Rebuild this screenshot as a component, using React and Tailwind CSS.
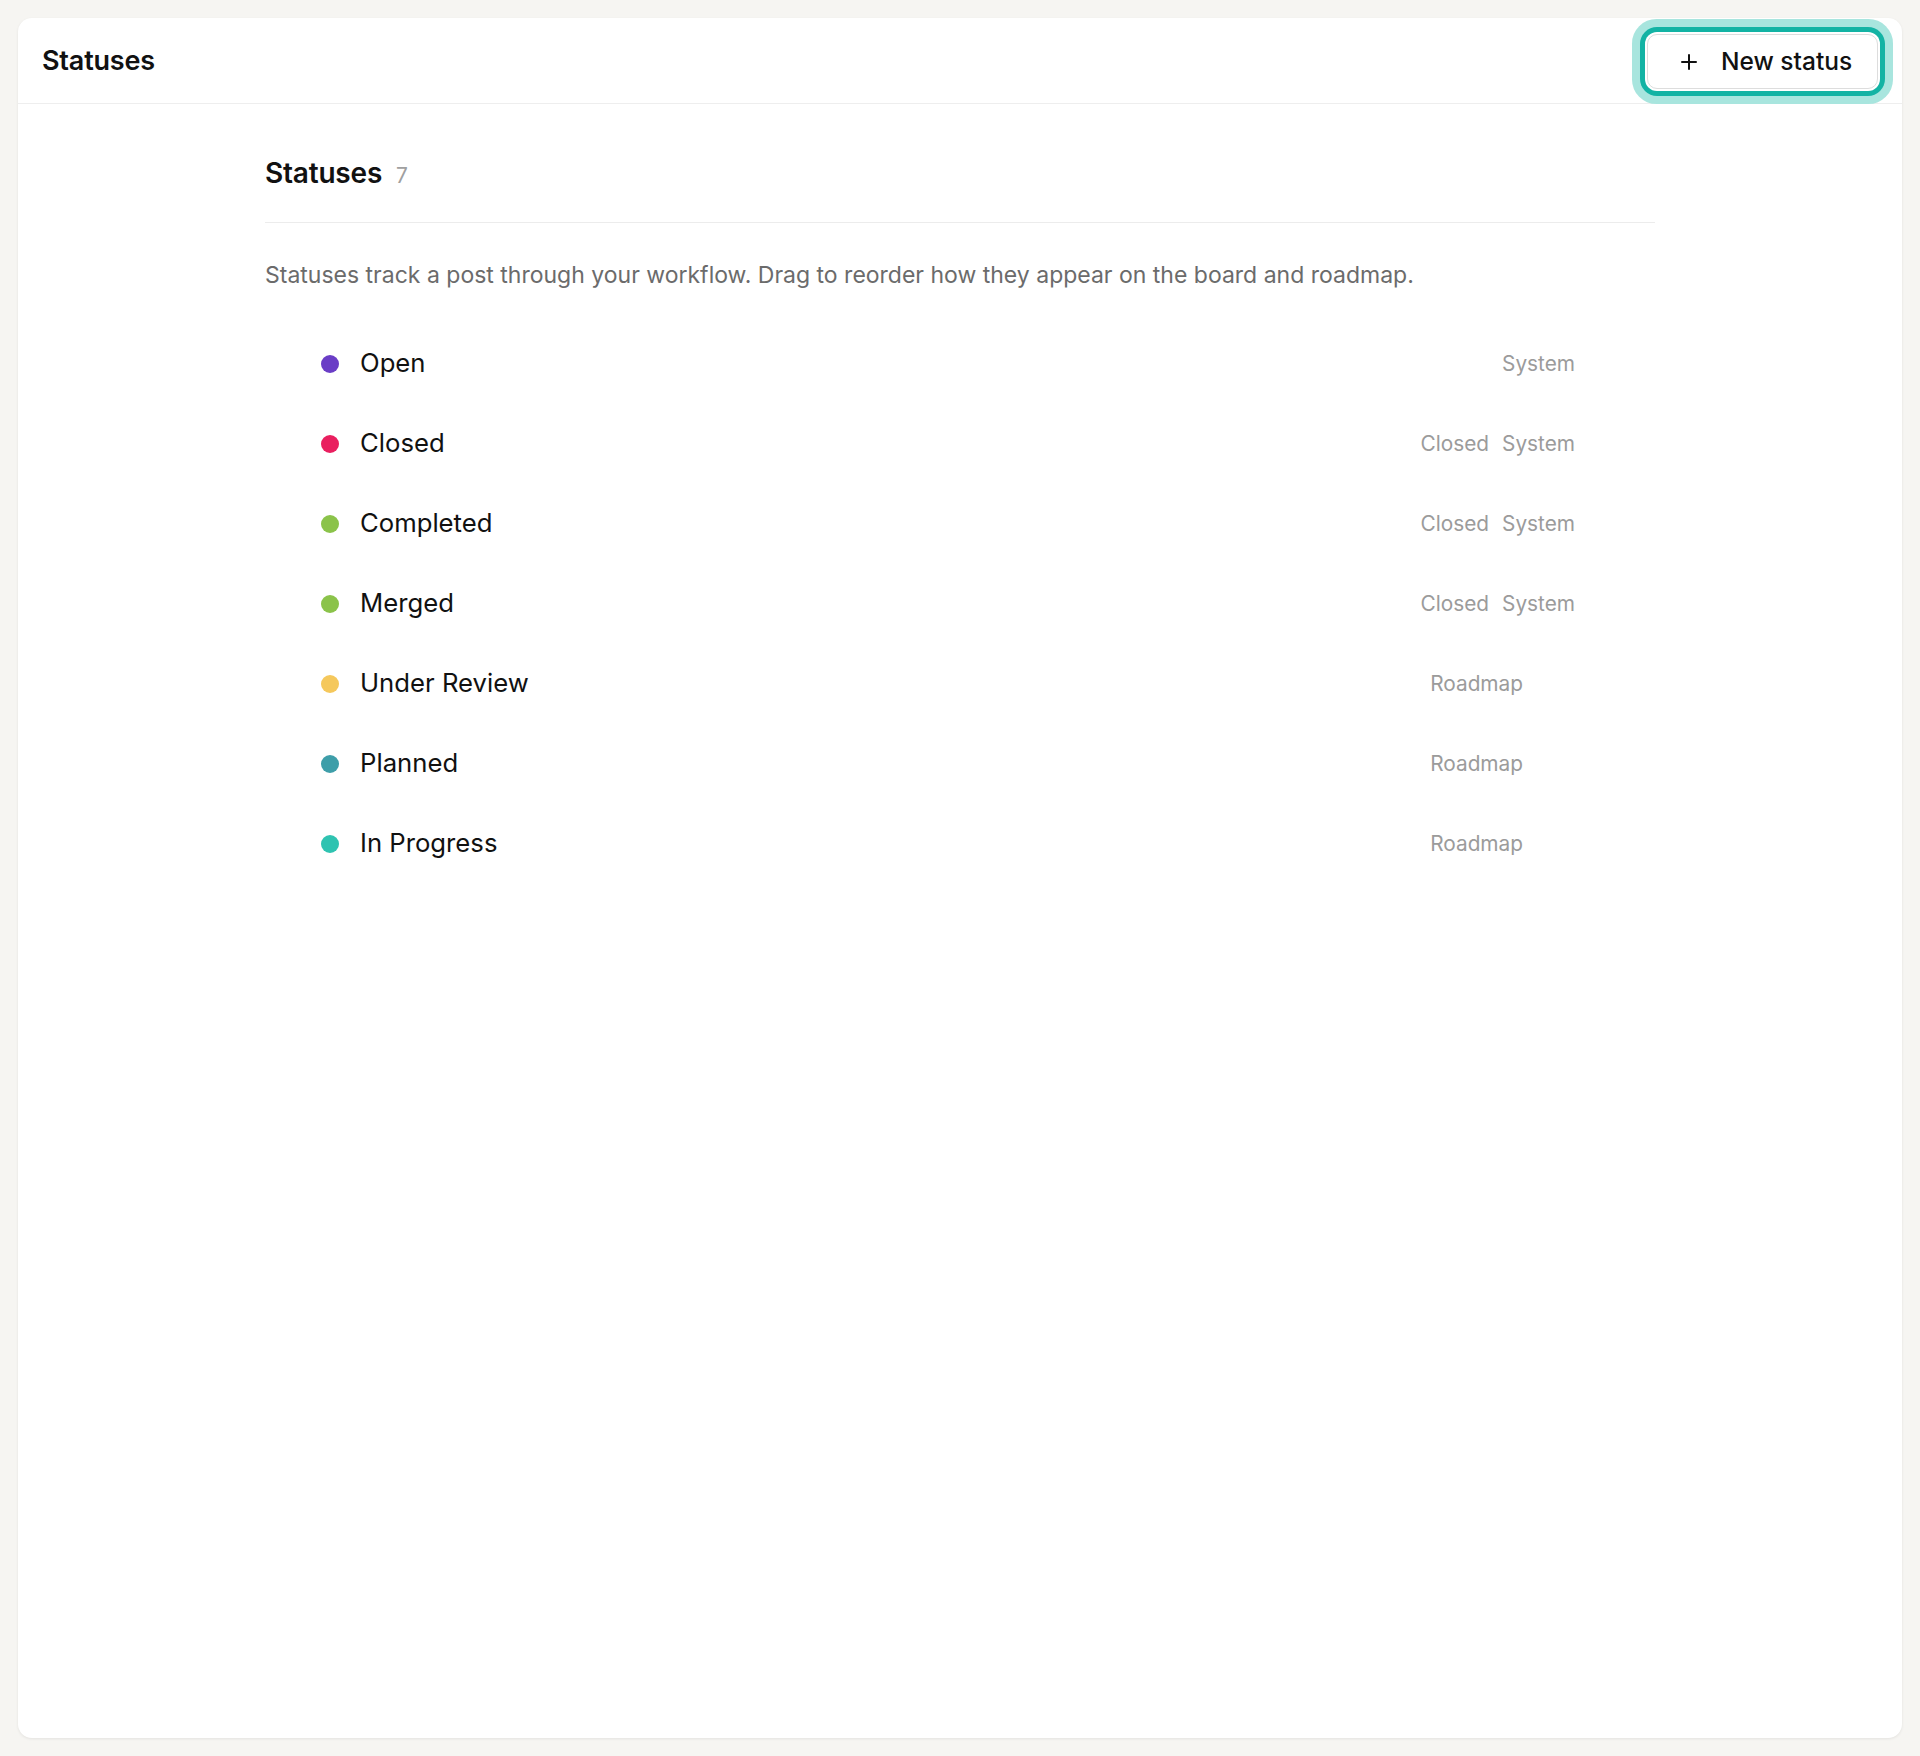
import React from 'react';
import { Plus } from 'lucide-react';

const statuses = [
  { name: 'Open', color: 'bg-[#6a3dc6]', tags: ['System'] },
  { name: 'Closed', color: 'bg-[#e91f5f]', tags: ['Closed', 'System'] },
  { name: 'Completed', color: 'bg-[#8bc34a]', tags: ['Closed', 'System'] },
  { name: 'Merged', color: 'bg-[#8bc34a]', tags: ['Closed', 'System'] },
  { name: 'Under Review', color: 'bg-[#f5c85c]', tags: ['Roadmap'], roadmap: true },
  { name: 'Planned', color: 'bg-[#3e9ea9]', tags: ['Roadmap'], roadmap: true },
  { name: 'In Progress', color: 'bg-[#2fc3b1]', tags: ['Roadmap'], roadmap: true },
];

const App = () => {
  return (
    <div className="min-h-[1756px] bg-[#f6f5f2] p-[18px] font-['Inter','Noto_Sans',sans-serif] text-[#111]">
      <div className="h-[1720px] rounded-[14px] bg-white shadow-[0_1px_3px_rgba(0,0,0,0.08)] flex flex-col">
        <div className="h-[86px] flex items-center justify-between pl-6 pr-6 pt-[2px] border-b border-[#eeeeee] shrink-0">
          <h1 className="text-[27px] font-semibold tracking-[-0.2px]">Statuses</h1>
          <button className="h-[55px] w-[231px] flex items-center pl-[29px] gap-[20px] rounded-[10px] bg-white border border-[#dddddd] shadow-[0_0_0_2px_#ffffff,0_0_0_7px_#13b3a4,0_0_0_15px_#a8e5de] text-[24.5px] font-medium">
            <Plus size={24} strokeWidth={2} />
            New status
          </button>
        </div>

        <div className="w-[1390px] mx-auto">
          <div className="pt-[51px] pb-[30px] border-b border-[#ececec] flex items-baseline gap-[14px]">
            <h2 className="text-[28px] leading-[36px] font-semibold tracking-[-0.2px]">Statuses</h2>
            <span className="text-[21px] text-[#a0a0a0]">7</span>
          </div>
          <p className="mt-[36px] text-[23px] leading-[32px] text-[#6b6b6b]">
            Statuses track a post through your workflow. Drag to reorder how they appear on the board and roadmap.
          </p>

          <div className="mt-[33px] flex flex-col">
            {statuses.map((s) => (
              <div key={s.name} className="h-[80px] flex items-center pl-[56px] pr-[80px]">
                <span className={`w-[18px] h-[18px] rounded-full ${s.color}`} />
                <span className="ml-[21px] text-[25.7px] flex-1">{s.name}</span>
                <div className={`flex gap-[13px] text-[20.8px] text-[#9b9b9b] ${s.roadmap ? 'mr-[52px]' : ''}`}>
                  {s.tags.map((t) => (
                    <span key={t}>{t}</span>
                  ))}
                </div>
              </div>
            ))}
          </div>
        </div>
      </div>
    </div>
  );
};

export default App;
